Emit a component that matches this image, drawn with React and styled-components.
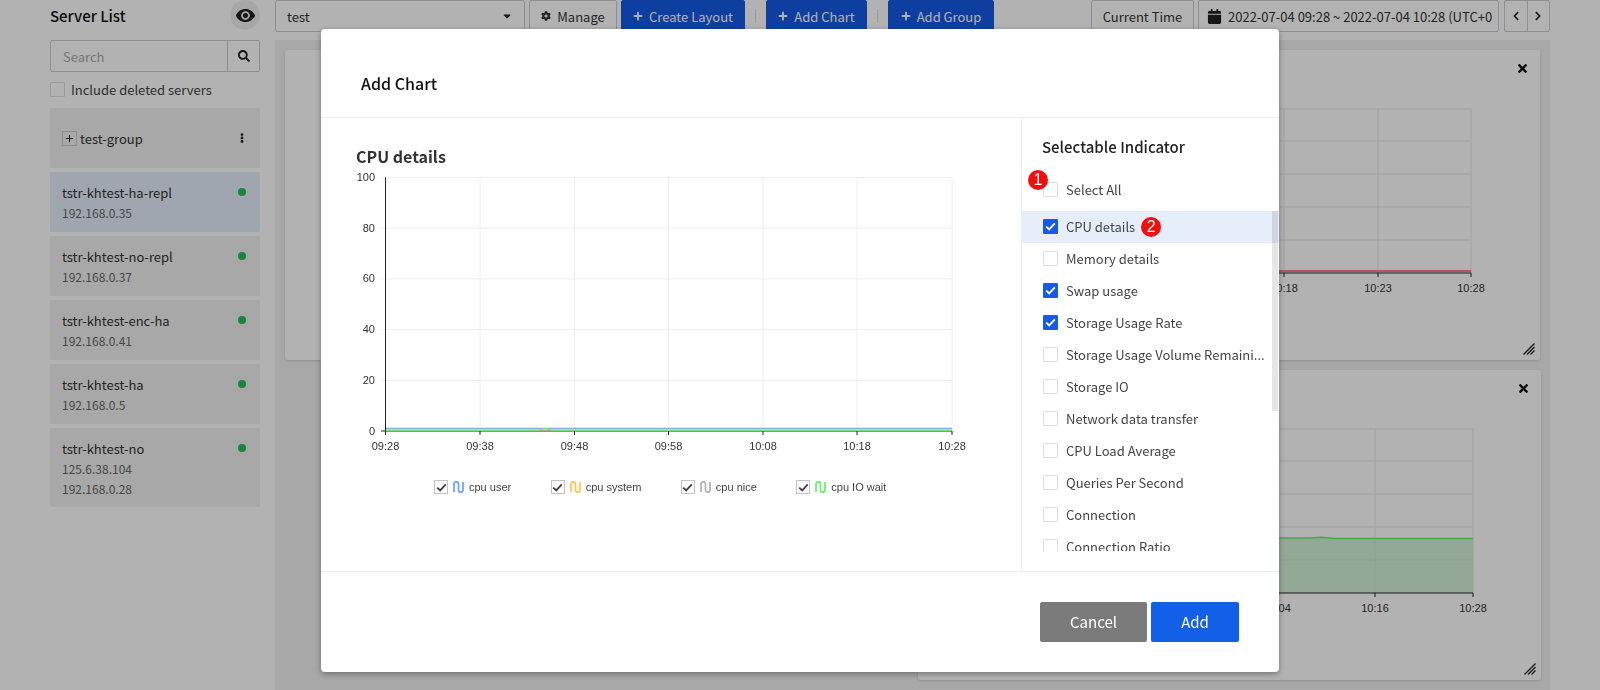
import React from "react"
import styled, { createGlobalStyle } from "styled-components"
import { FaCalendar, FaCaretDown, FaChevronLeft, FaChevronRight, FaCog, FaEllipsisV, FaPlus, FaSearch, FaTimes } from "react-icons/fa"
import { FiPlus } from "react-icons/fi"
import { MdVisibility } from "react-icons/md"

const GlobalStyle = createGlobalStyle`
  html, body {
    margin: 0;
    height: 100%;
    background: #fff;
    overflow: hidden;
  }
  * { box-sizing: border-box; }
  body {
    font-family: "Noto Sans CJK KR", "Noto Sans", sans-serif;
    font-size: 13px;
    color: #333;
  }
`

const servers = [
  { name: "tstr-khtest-ha-repl", ips: ["192.168.0.35"], selected: true },
  { name: "tstr-khtest-no-repl", ips: ["192.168.0.37"] },
  { name: "tstr-khtest-enc-ha", ips: ["192.168.0.41"] },
  { name: "tstr-khtest-ha", ips: ["192.168.0.5"] },
  { name: "tstr-khtest-no", ips: ["125.6.38.104", "192.168.0.28"] },
]

const indicators = [
  { label: "CPU details", checked: true, active: true, badge: "2" },
  { label: "Memory details" },
  { label: "Swap usage", checked: true },
  { label: "Storage Usage Rate", checked: true },
  { label: "Storage Usage Volume Remaini..." },
  { label: "Storage IO" },
  { label: "Network data transfer" },
  { label: "CPU Load Average" },
  { label: "Queries Per Second" },
  { label: "Connection" },
  { label: "Connection Ratio" },
]

const legend = [
  { label: "cpu user", color: "#6ea8fe" },
  { label: "cpu system", color: "#ffc65c" },
  { label: "cpu nice", color: "#b5b5b5" },
  { label: "cpu IO wait", color: "#6cf06c" },
]

const CheckMark = () => (
  <svg width="11" height="9" viewBox="0 0 11 9" fill="none">
    <path d="M1.2 4.6 4.2 7.4 9.8 1.4" stroke="currentColor" strokeWidth="1.9" />
  </svg>
)

const Page = styled.div`
  display: flex;
  height: 690px;
  overflow: hidden;
`

const Sidebar = styled.aside`
  flex: none;
  width: 275px;
  padding: 0 15px 0 50px;
`

const SidebarHead = styled.div`
  display: flex;
  align-items: center;
  justify-content: space-between;
  height: 30px;
  margin-bottom: 10px;
`

const SidebarTitle = styled.h2`
  margin: 0;
  font-size: 15px;
  font-weight: 500;
  color: #111;
`

const EyeButton = styled.div`
  display: flex;
  align-items: center;
  justify-content: center;
  width: 30px;
  height: 30px;
  border-radius: 50%;
  background: #f0f0f0;
  color: #222;
  font-size: 21px;
`

const SearchBox = styled.div`
  display: flex;
  height: 32px;
  border: 1px solid #ccc;
  border-radius: 2px;
`

const SearchInput = styled.div`
  flex: 1;
  padding-left: 12px;
  line-height: 32px;
  color: #aaa;
`

const SearchButton = styled.div`
  display: flex;
  align-items: center;
  justify-content: center;
  width: 32px;
  border-left: 1px solid #ccc;
  color: #222;
  font-size: 12px;
`

const IncludeRow = styled.label`
  display: flex;
  align-items: center;
  gap: 6px;
  height: 36px;
  padding-bottom: 1px;
  color: #444;
`

const EmptyBox = styled.span`
  flex: none;
  width: 15px;
  height: 15px;
  border: 1px solid #ddd;
  border-radius: 1px;
  background: #fff;
`

const GroupRow = styled.div`
  display: flex;
  align-items: center;
  height: 60px;
  margin-bottom: 4px;
  padding: 0 12px;
  border-radius: 2px;
  background: #f1f1f1;
  color: #333;
`

const PlusBox = styled.span`
  display: flex;
  align-items: center;
  justify-content: center;
  width: 15px;
  height: 15px;
  margin-right: 3px;
  border: 1px solid #ccc;
  color: #222;
  font-size: 11px;
`

const Kebab = styled.span`
  margin-left: auto;
  margin-right: 1px;
  color: #222;
  font-size: 10px;
  line-height: 1;
`

const ServerCard = styled.div`
  display: flex;
  justify-content: space-between;
  min-height: 60px;
  margin-bottom: 4px;
  padding: 10px 14px 8px 12px;
  border-radius: 2px;
  background: ${p => (p.$selected ? "#e5eefb" : "#f1f1f1")};
`

const ServerName = styled.div`
  height: 21px;
  line-height: 21px;
  color: #333;
`

const ServerIp = styled.div`
  height: 20px;
  line-height: 20px;
  color: #666;
  font-size: 12px;
`

const StatusDot = styled.span`
  width: 8px;
  height: 8px;
  margin-top: 6px;
  border-radius: 50%;
  background: #26bd50;
`

const Main = styled.main`
  flex: none;
  width: 1275px;
`

const Toolbar = styled.div`
  display: flex;
  align-items: center;
  height: 32px;
  margin-bottom: 8px;
`

const ToolButton = styled.div`
  display: flex;
  align-items: center;
  justify-content: center;
  gap: 6px;
  flex: none;
  width: ${p => p.$width}px;
  height: 32px;
  margin-right: ${p => p.$gap || 0}px;
  border: 1px solid ${p => (p.$primary ? "#155be5" : "#ccc")};
  border-radius: 2px;
  background: ${p => (p.$primary ? "#155be5" : "#fff")};
  color: ${p => (p.$primary ? "#fff" : "#333")};
  white-space: nowrap;
  svg { font-size: 10px; }
`

const LayoutSelect = styled.div`
  display: flex;
  flex: none;
  align-items: center;
  justify-content: space-between;
  width: 250px;
  height: 32px;
  margin-right: 4px;
  padding: 0 11px;
  border: 1px solid #ccc;
  border-radius: 2px;
  color: #333;
  svg { font-size: 12px; color: #222; }
`

const ToolDivider = styled.span`
  flex: none;
  width: 1px;
  height: 14px;
  margin: 0 10px;
  background: #ddd;
`

const DateButton = styled.div`
  display: flex;
  align-items: center;
  flex: none;
  width: 301px;
  height: 32px;
  margin-right: 5px;
  padding-left: 8px;
  border: 1px solid #ccc;
  border-radius: 2px;
  overflow: hidden;
  color: #333;
  white-space: nowrap;
  svg { flex: none; margin-right: 6px; font-size: 15px; color: #222; }
`

const Pager = styled.div`
  display: flex;
  flex: none;
  width: 46px;
  height: 32px;
  border: 1px solid #ccc;
  border-radius: 2px;
`

const PagerButton = styled.div`
  display: flex;
  flex: 1;
  align-items: center;
  justify-content: center;
  color: #222;
  font-size: 10px;
  & + & { border-left: 1px solid #ccc; }
`

const Dashboard = styled.section`
  height: 650px;
  padding: 10px;
  background: #f1f1f1;
`

const ChartCard = styled.div`
  position: relative;
  width: ${p => p.$width}px;
  height: 310px;
  margin: 0 0 10px ${p => p.$offset || 0}px;
  border-radius: 2px;
  background: #fff;
  box-shadow: 0 1px 3px rgba(0, 0, 0, 0.15);
  svg.plot { display: block; }
`

const CloseIcon = styled.span`
  position: absolute;
  top: 12px;
  right: 11px;
  color: #111;
  font-size: 13px;
  line-height: 1;
`

const ResizeHandle = styled.svg`
  position: absolute;
  right: 5px;
  bottom: 5px;
`

const Overlay = styled.div`
  position: fixed;
  inset: 0;
  background: rgba(0, 0, 0, 0.3);
`

const Modal = styled.div`
  display: flex;
  flex-direction: column;
  width: 958px;
  height: 643px;
  margin: 29px 0 0 321px;
  border-radius: 4px;
  background: #fff;
  box-shadow: 0 2px 6px rgba(0, 0, 0, 0.35);
`

const ModalHeader = styled.header`
  flex: none;
  height: 89px;
  padding: 42px 0 0 40px;
  border-bottom: 1px solid #eee;
  color: #111;
  font-size: 16px;
  font-weight: 500;
  line-height: 24px;
`

const ModalBody = styled.div`
  display: flex;
  flex: 1;
  min-height: 0;
`

const ChartPane = styled.div`
  flex: none;
  width: 700px;
  padding-top: 26px;
`

const ChartTitle = styled.h3`
  margin: 0 0 0 35px;
  color: #333;
  font-size: 16px;
  font-weight: 700;
  line-height: 24px;
`

const PlotSvg = styled.svg`
  display: block;
  margin-left: 19px;
`

const Legend = styled.div`
  display: flex;
  gap: 39.5px;
  margin: 27px 0 0 113px;
  font-family: "Liberation Sans", Arial, sans-serif;
  font-size: 11px;
  color: #444;
`

const LegendItem = styled.div`
  display: flex;
  align-items: center;
  height: 14px;
`

const LegendCheck = styled.span`
  display: flex;
  align-items: center;
  justify-content: center;
  width: 14px;
  height: 14px;
  margin-right: 5px;
  border: 1px solid #c4c4c4;
  color: #444;
`

const SelectPane = styled.div`
  flex: 1;
  min-width: 0;
  border-left: 1px solid #eee;
`

const SelectTitle = styled.h3`
  height: 56px;
  margin: 0;
  padding: 17px 0 0 20px;
  color: #222;
  font-size: 15px;
  font-weight: 500;
  line-height: 24px;
`

const SelectAllRow = styled.div`
  position: relative;
  display: flex;
  align-items: center;
  height: 32px;
  margin-bottom: 5px;
  padding: 0 0 1px 21px;
  color: #444;
`

const IndicatorList = styled.div`
  position: relative;
  height: 340px;
  overflow: hidden;
`

const IndicatorRow = styled.div`
  display: flex;
  align-items: center;
  height: 32px;
  padding: 0 12px 1px 21px;
  background: ${p => (p.$active ? "#e6eefb" : "transparent")};
  color: #444;
`

const IndicatorLabel = styled.span`
  white-space: nowrap;
`

const CheckBox = styled.span`
  display: flex;
  flex: none;
  align-items: center;
  justify-content: center;
  width: 15px;
  height: 15px;
  margin-right: 8px;
  border: 1px solid ${p => (p.$checked ? "#155be5" : "#ddd")};
  border-radius: 1px;
  background: ${p => (p.$checked ? "#155be5" : "#fff")};
  color: #fff;
`

const Badge = styled.span`
  display: flex;
  flex: none;
  align-items: center;
  justify-content: center;
  width: 20px;
  height: 20px;
  border-radius: 50%;
  background: #f40d0d;
  color: #fff;
  font-family: "Liberation Sans", Arial, sans-serif;
  font-size: 16px;
  font-weight: 400;
  line-height: 1;
`

const CornerBadge = styled(Badge)`
  position: absolute;
  top: -4px;
  left: 6px;
`

const InlineBadge = styled(Badge)`
  margin-left: 6px;
`

const ScrollThumb = styled.span`
  position: absolute;
  top: 0;
  right: 1px;
  width: 6px;
  height: 200px;
  background: rgba(0, 0, 0, 0.1);
`

const ModalFooter = styled.footer`
  display: flex;
  flex: none;
  align-items: center;
  justify-content: flex-end;
  gap: 4px;
  height: 101px;
  padding: 0 40px 0 0;
  border-top: 1px solid #eee;
`

const FooterButton = styled.div`
  display: flex;
  align-items: center;
  justify-content: center;
  width: ${p => p.$width}px;
  height: 40px;
  margin-top: -1px;
  border-radius: 2px;
  background: ${p => (p.$primary ? "#125fe8" : "#7a7a7a")};
  color: #fff;
  font-size: 15px;
`

const AxisText = styled.text`
  font-family: "Liberation Sans", Arial, sans-serif;
  font-size: 11px;
  fill: #333;
`

const LegendGlyph = ({ color }) => (
  <svg width="11" height="12" viewBox="0 0 11 12" fill="none" style={{ marginRight: 5 }}>
    <path d="M1 11V3a2 2 0 0 1 4.500 0v6a2 2 0 0 0 4.500 0V1" stroke={color} strokeWidth="1.800" />
  </svg>
)

const CpuPlot = () => {
  const xs = [385.5, 480, 574.5, 668.5, 763, 857, 952]
  const ticks = ["09:28", "09:38", "09:48", "09:58", "10:08", "10:18", "10:28"]
  const yLabels = [100, 80, 60, 40, 20, 0]
  return (
    <PlotSvg width="640" height="285" viewBox="340 168 640 285" fill="none">
      {yLabels.map((v, i) => {
        const y = 177.5 + i * 50.7
        return (
          <g key={v}>
            <line x1="381" x2="952" y1={y} y2={y} stroke={v === 0 ? "#222" : "#eee"} />
            <AxisText x="375" y={y + 3.500} textAnchor="end">{v}</AxisText>
          </g>
        )
      })}
      {xs.map((x, i) => (
        <g key={x}>
          <line x1={x} x2={x} y1="177.500" y2="431" stroke="#eee" />
          <line x1={x} x2={x} y1="431" y2="435" stroke="#222" />
          <AxisText x={x} y="450" textAnchor="middle">{ticks[i]}</AxisText>
        </g>
      ))}
      <line x1="385.500" x2="385.500" y1="177.500" y2="431" stroke="#222" />
      <path d="M386 428.500H952" stroke="#6ea8fe" strokeWidth="1.300" />
      <path d="M386 429.200H952" stroke="#bbb" strokeWidth="1" />
      <path d="M386 429.800H952" stroke="#ffd27a" strokeWidth="1" />
      <path d="M386 430.300H538L545 428.300 552 430.300H952" stroke="#6cf06c" strokeWidth="1" />
    </PlotSvg>
  )
}

const TopPlot = () => {
  const xs = [1284, 1378, 1471]
  const labels = ["10:18", "10:23", "10:28"]
  return (
    <svg className="plot" width="1255" height="310" viewBox="285 50 1255 310" fill="none">
      {[109, 141, 174, 207, 240].map(y => <line key={y} x1="1270" x2="1471" y1={y} y2={y} stroke="#e6e6e6" />)}
      {xs.map((x, i) => (
        <g key={x}>
          <line x1={x} x2={x} y1="109" y2="273" stroke="#e6e6e6" />
          <line x1={x} x2={x} y1="273" y2="277" stroke="#222" />
          <AxisText x={x} y="292" textAnchor="middle">{labels[i]}</AxisText>
        </g>
      ))}
      <path d="M1270 271H1471" stroke="#ff8080" strokeWidth="2" />
      <path d="M1270 273H1471" stroke="#222" />
    </svg>
  )
}

const BottomPlot = () => (
  <svg className="plot" width="623" height="310" viewBox="918 370 623 310" fill="none">
    {[429, 461, 494, 527, 560].map(y => <line key={y} x1="1270" x2="1473" y1={y} y2={y} stroke="#e6e6e6" />)}
    {[[1277, "10:04"], [1375, "10:16"], [1473, "10:28"]].map(([x, label]) => (
      <g key={x}>
        <line x1={x} x2={x} y1="429" y2="593" stroke="#e6e6e6" />
        <line x1={x} x2={x} y1="593" y2="597" stroke="#222" />
        <AxisText x={x} y="612" textAnchor="middle">{label}</AxisText>
      </g>
    ))}
    <path d="M1270 538H1310L1321 537.300 1335 538.500H1473V593H1270Z" fill="#b0e8b4" fillOpacity="0.55" />
    <path d="M1270 538H1310L1321 537.300 1335 538.500H1473" stroke="#6cf06c" strokeWidth="1.500" />
    <path d="M1270 593H1473" stroke="#222" />
  </svg>
)

const Handle = () => (
  <ResizeHandle width="12" height="12" viewBox="0 0 12 12" fill="none" stroke="#222" strokeWidth="1.300">
    <path d="M0.500 11.500 11.500 0.500M4 11.500 11.500 4M7.500 11.500 11.500 7.500" />
  </ResizeHandle>
)

export default function App() {
  return (
    <>
      <GlobalStyle />
      <Page>
        <Sidebar>
          <SidebarHead>
            <SidebarTitle>Server List</SidebarTitle>
            <EyeButton><MdVisibility /></EyeButton>
          </SidebarHead>
          <SearchBox>
            <SearchInput>Search</SearchInput>
            <SearchButton><FaSearch /></SearchButton>
          </SearchBox>
          <IncludeRow><EmptyBox />Include deleted servers</IncludeRow>
          <GroupRow>
            <PlusBox><FiPlus /></PlusBox>
            test-group
            <Kebab><FaEllipsisV /></Kebab>
          </GroupRow>
          {servers.map(s => (
            <ServerCard key={s.name} $selected={s.selected}>
              <div>
                <ServerName>{s.name}</ServerName>
                {s.ips.map(ip => <ServerIp key={ip}>{ip}</ServerIp>)}
              </div>
              <StatusDot />
            </ServerCard>
          ))}
        </Sidebar>
        <Main>
          <Toolbar>
            <LayoutSelect>test<FaCaretDown /></LayoutSelect>
            <ToolButton $width={88} $gap={4}><FaCog />Manage</ToolButton>
            <ToolButton $width={124} $primary><FaPlus />Create Layout</ToolButton>
            <ToolDivider />
            <ToolButton $width={101} $primary><FaPlus />Add Chart</ToolButton>
            <ToolDivider />
            <ToolButton $width={106} $primary $gap={97}><FaPlus />Add Group</ToolButton>
            <ToolButton $width={103} $gap={4}>Current Time</ToolButton>
            <DateButton><FaCalendar />2022-07-04 09:28 ~ 2022-07-04 10:28 (UTC+0</DateButton>
            <Pager>
              <PagerButton><FaChevronLeft /></PagerButton>
              <PagerButton><FaChevronRight /></PagerButton>
            </Pager>
          </Toolbar>
          <Dashboard>
            <ChartCard $width={1255}>
              <TopPlot />
              <CloseIcon><FaTimes /></CloseIcon>
              <Handle />
            </ChartCard>
            <ChartCard $width={623} $offset={633}>
              <BottomPlot />
              <CloseIcon><FaTimes /></CloseIcon>
              <Handle />
            </ChartCard>
          </Dashboard>
        </Main>
      </Page>
      <Overlay>
        <Modal>
          <ModalHeader>Add Chart</ModalHeader>
          <ModalBody>
            <ChartPane>
              <ChartTitle>CPU details</ChartTitle>
              <CpuPlot />
              <Legend>
                {legend.map(item => (
                  <LegendItem key={item.label}>
                    <LegendCheck><CheckMark /></LegendCheck>
                    <LegendGlyph color={item.color} />
                    {item.label}
                  </LegendItem>
                ))}
              </Legend>
            </ChartPane>
            <SelectPane>
              <SelectTitle>Selectable Indicator</SelectTitle>
              <SelectAllRow>
                <CornerBadge>1</CornerBadge>
                <CheckBox />
                Select All
              </SelectAllRow>
              <IndicatorList>
                {indicators.map(item => (
                  <IndicatorRow key={item.label} $active={item.active}>
                    <CheckBox $checked={item.checked}>{item.checked && <CheckMark />}</CheckBox>
                    <IndicatorLabel>{item.label}</IndicatorLabel>
                    {item.badge && <InlineBadge>{item.badge}</InlineBadge>}
                  </IndicatorRow>
                ))}
                <ScrollThumb />
              </IndicatorList>
            </SelectPane>
          </ModalBody>
          <ModalFooter>
            <FooterButton $width={107}>Cancel</FooterButton>
            <FooterButton $width={88} $primary>Add</FooterButton>
          </ModalFooter>
        </Modal>
      </Overlay>
    </>
  )
}
